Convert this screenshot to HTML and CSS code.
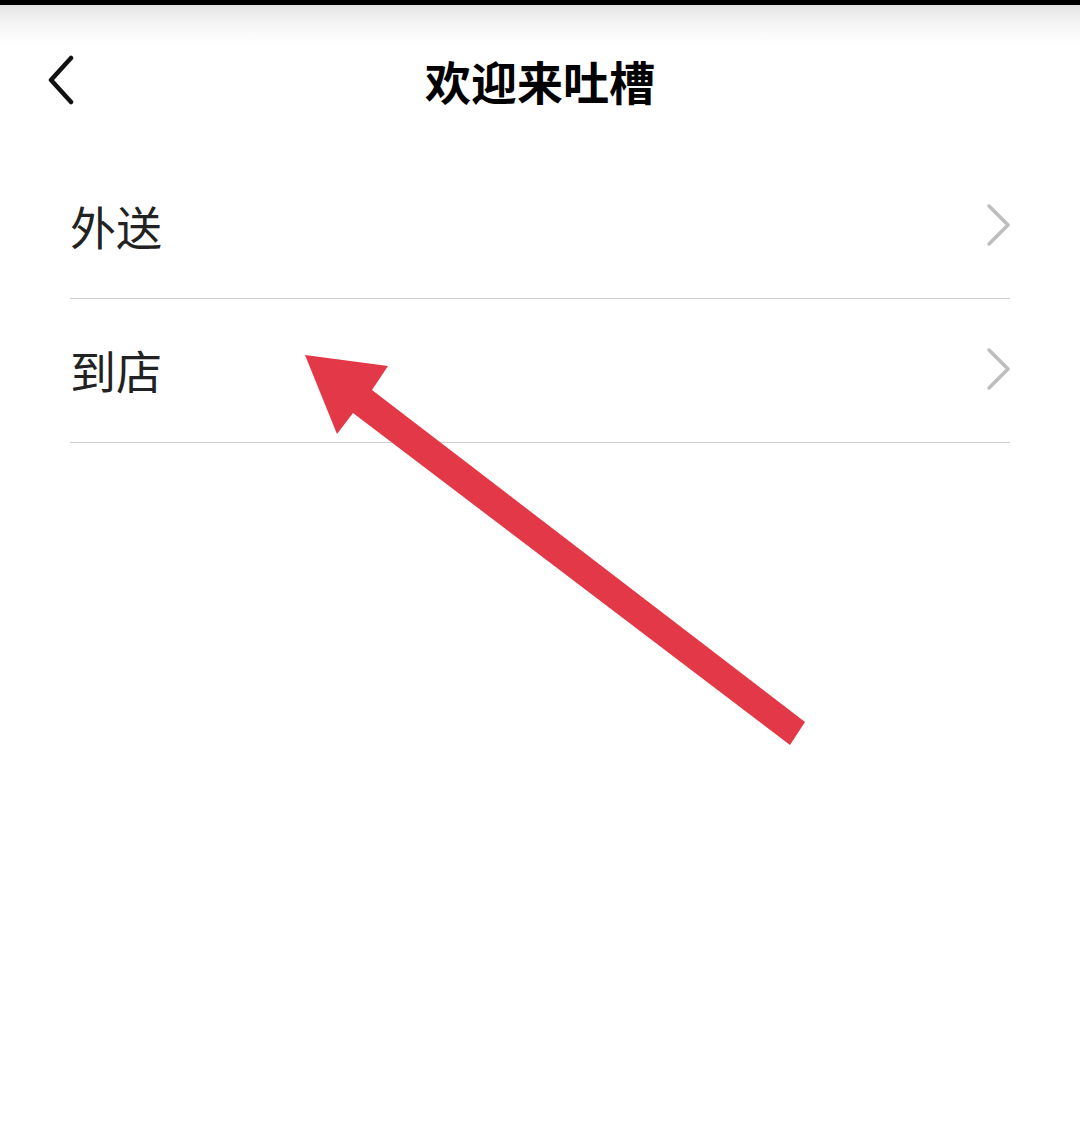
FILE: index.html
```html
<!DOCTYPE html>
<html lang="zh-CN">
<head>
    <meta charset="UTF-8">
    <meta name="viewport" content="width=device-width, initial-scale=1.0">
    <title>欢迎来吐槽</title>
    <link rel="stylesheet" href="styles.css">
</head>
<body>
    <div class="status-bar"></div>

    <header class="nav">
        <div class="nav__back">
            <svg width="30" height="50" viewBox="0 0 30 50">
                <path d="M25 3 L5 25 L25 47" fill="none" stroke="#111" stroke-width="4.5" stroke-linecap="round" stroke-linejoin="round"/>
            </svg>
        </div>
        <h1 class="nav__title">欢迎来吐槽</h1>
        <div class="nav__side"></div>
    </header>

    <div class="menu">
        <div class="menu__item">
            <span class="menu__name">外送</span>
            <svg class="menu__arrow" width="26" height="44" viewBox="0 0 26 44">
                <path d="M3 3 L22 22 L3 41" fill="none" stroke="#bdbdbd" stroke-width="3.5" stroke-linecap="round" stroke-linejoin="round"/>
            </svg>
        </div>
        <div class="menu__item">
            <span class="menu__name">到店</span>
            <svg class="menu__arrow" width="26" height="44" viewBox="0 0 26 44">
                <path d="M3 3 L22 22 L3 41" fill="none" stroke="#bdbdbd" stroke-width="3.5" stroke-linecap="round" stroke-linejoin="round"/>
            </svg>
        </div>
    </div>

    <!-- red pointer drawn over the page -->
    <svg class="pointer" width="1080" height="1124" viewBox="0 0 1080 1124">
        <polygon points="305,355 388,366 372,390 805,722 790,745 353,413 337,434" fill="#e33847"/>
    </svg>
</body>
</html>
```

FILE: styles.css
```css
body{
    margin: 0;
    background: #fff;
    font-family: "Noto Sans CJK SC", "Noto Sans", sans-serif;
    color: #222;
    position: relative;
    min-height: 1124px;
}

.status-bar{
    height: 5px;
    background: #000;
}

.nav{
    display: grid;
    grid-template-columns: 1fr auto 1fr;
    align-items: center;
    padding: 47px 0 47px;
    background: linear-gradient(#e4e4e4 0, #f6f6f6 20px, #fff 40px);
}

.nav__back{
    padding-left: 46px;
    display: flex;
    align-items: center;
}

.nav__title{
    margin: 0;
    font-size: 46px;
    line-height: 56px;
    font-weight: 700;
    color: #000;
}

.menu{
    margin: 0 70px;
}

.menu__item{
    display: flex;
    align-items: center;
    justify-content: space-between;
    height: 143px;
    box-sizing: border-box;
    height: 144px;
    padding-bottom: 4px;
    border-bottom: 1px solid #cfcfcf;
}

.menu__name{
    font-size: 46px;
    line-height: 56px;
    color: #222;
}

.menu__arrow{
    margin-right: -2px;
}

.pointer{
    position: absolute;
    left: 0;
    top: 0;
    pointer-events: none;
}
```
